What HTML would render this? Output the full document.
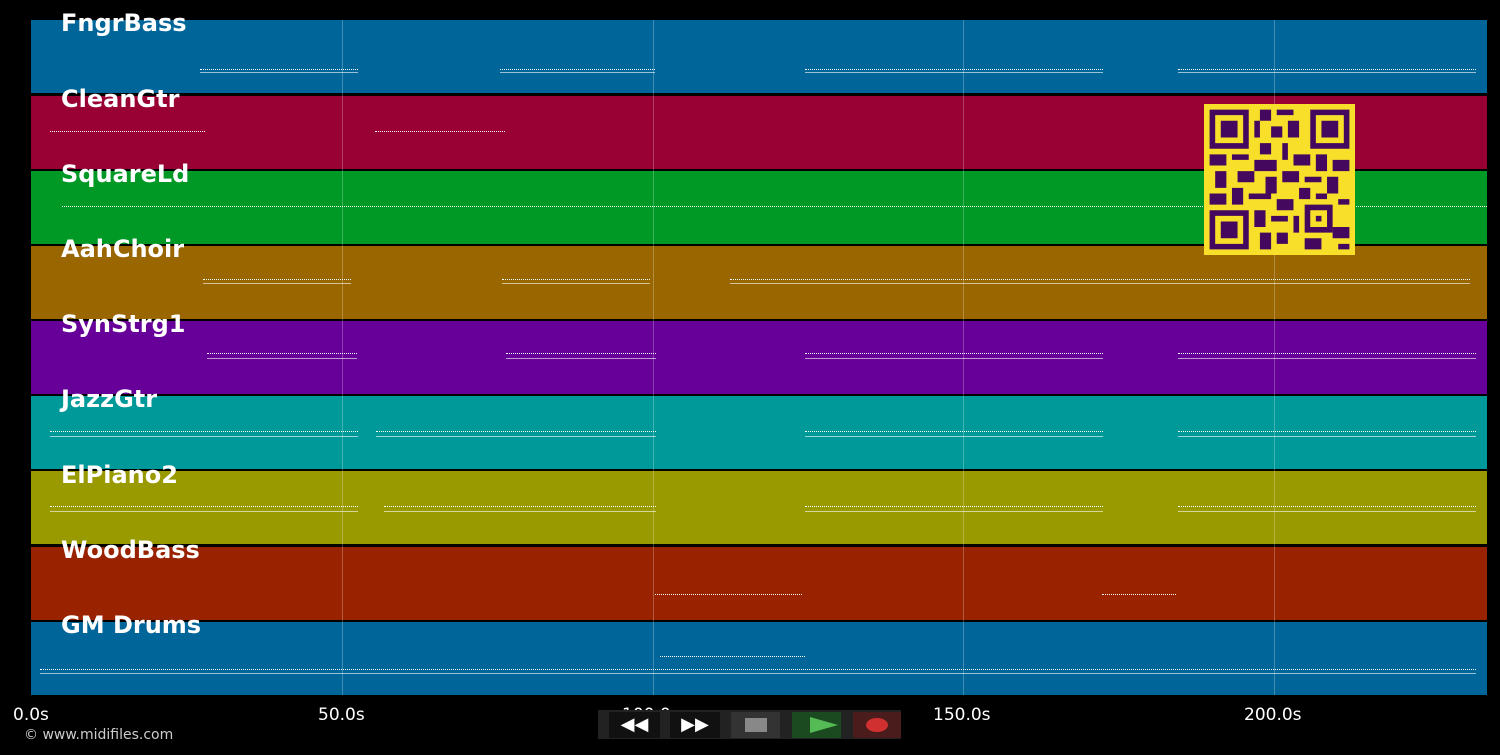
<!DOCTYPE html><html><head><style>
body{margin:0;background:#000;width:1500px;height:755px;overflow:hidden;position:relative;font-family:"DejaVu Sans","Liberation Sans",sans-serif}
.t{position:absolute;left:31px;width:1456px;height:73px}
.l{position:absolute;left:61px;color:#fff;font-weight:bold;font-size:24px}
.g{position:absolute;top:20px;height:675px;width:1px;background:rgba(255,255,255,.25)}
.n{position:absolute;height:2px;border-top:1px dotted #fff;border-bottom:1px solid rgba(255,255,255,.6)}
.ax{position:absolute;top:705px;color:#fff;font-size:17px}
.b{position:absolute;top:712px;height:26px}
</style></head><body>
<div class="t" style="top:20px;background:#006699"></div>
<div class="t" style="top:96px;background:#990033"></div>
<div class="t" style="top:171px;background:#009926"></div>
<div class="t" style="top:246px;background:#996600"></div>
<div class="t" style="top:321px;background:#660099"></div>
<div class="t" style="top:396px;background:#009999"></div>
<div class="t" style="top:471px;background:#999900"></div>
<div class="t" style="top:547px;background:#992200"></div>
<div class="t" style="top:622px;background:#006699"></div>
<div class="g" style="left:342px"></div><div class="g" style="left:653px"></div><div class="g" style="left:963px"></div><div class="g" style="left:1274px"></div>
<div class="n" style="top:69px;left:200px;width:158px"></div><div class="n" style="top:69px;left:500px;width:155px"></div><div class="n" style="top:69px;left:805px;width:298px"></div><div class="n" style="top:69px;left:1178px;width:298px"></div>
<div class="n" style="top:131px;left:50px;width:155px;border-bottom:none"></div><div class="n" style="top:131px;left:375px;width:130px;border-bottom:none"></div>
<div class="n" style="top:206px;left:62px;width:1425px;border-bottom:none"></div>
<div class="n" style="top:279px;left:203px;width:148px;height:3px"></div><div class="n" style="top:279px;left:502px;width:148px;height:3px"></div><div class="n" style="top:279px;left:730px;width:740px;height:3px"></div>
<div class="n" style="top:353px;left:207px;width:150px;height:4px"></div><div class="n" style="top:353px;left:506px;width:150px;height:4px"></div><div class="n" style="top:353px;left:805px;width:298px;height:4px"></div><div class="n" style="top:353px;left:1178px;width:298px;height:4px"></div>
<div class="n" style="top:431px;left:50px;width:308px;height:4px"></div><div class="n" style="top:431px;left:376px;width:280px;height:4px"></div><div class="n" style="top:431px;left:805px;width:298px;height:4px"></div><div class="n" style="top:431px;left:1178px;width:298px;height:4px"></div>
<div class="n" style="top:506px;left:50px;width:308px;height:4px"></div><div class="n" style="top:506px;left:384px;width:272px;height:4px"></div><div class="n" style="top:506px;left:805px;width:298px;height:4px"></div><div class="n" style="top:506px;left:1178px;width:298px;height:4px"></div>
<div class="n" style="top:594px;left:655px;width:147px;border-bottom:none"></div><div class="n" style="top:594px;left:1102px;width:74px;border-bottom:none"></div>
<div class="n" style="top:669px;left:40px;width:1436px;height:3px"></div><div class="n" style="top:656px;left:660px;width:145px;border-bottom:none"></div>
<div class="l" style="top:9px">FngrBass</div><div class="l" style="top:85px">CleanGtr</div><div class="l" style="top:160px">SquareLd</div><div class="l" style="top:235px">AahChoir</div><div class="l" style="top:310px">SynStrg1</div><div class="l" style="top:385px">JazzGtr</div><div class="l" style="top:461px">ElPiano2</div><div class="l" style="top:536px">WoodBass</div><div class="l" style="top:611px">GM Drums</div>
<svg style="position:absolute;left:1204px;top:104px" width="151" height="151" viewBox="0 0 27 27">
<rect width="27" height="27" fill="#f8e02a"/>
<g fill="#44095e">
<path d="M1 1h7v7h-7zM19 1h7v7h-7zM1 19h7v7h-7z"/>
</g><g fill="#f8e02a"><path d="M2 2h5v5h-5zM20 2h5v5h-5zM2 20h5v5h-5z"/></g>
<g fill="#44095e"><path d="M3 3h3v3h-3zM21 3h3v3h-3zM3 21h3v3h-3zM18 18h5v5h-5z"/>
<path d="M10 1h2v2h-2zM13 1h3v1h-3zM9 3h1v3h-1zM12 4h2v2h-2zM15 3h2v3h-2zM10 7h2v2h-2zM14 7h1v3h-1zM1 9h3v2h-3zM5 9h3v1h-3zM9 10h4v2h-4zM16 9h3v2h-3zM20 9h2v3h-2zM23 10h3v2h-3zM2 12h2v3h-2zM6 12h3v2h-3zM11 13h2v3h-2zM14 12h3v2h-3zM18 13h3v1h-3zM22 13h2v3h-2zM1 16h3v2h-3zM5 15h2v3h-2zM8 16h4v1h-4zM13 17h3v2h-3zM17 15h2v2h-2zM20 16h2v1h-2zM24 17h2v1h-2zM9 19h2v3h-2zM12 20h3v1h-3zM16 20h1v3h-1zM10 23h2v3h-2zM13 23h2v2h-2zM18 24h3v2h-3zM23 22h3v2h-3zM24 25h2v1h-2z"/></g>
<path d="M19 19h3v3h-3z" fill="#f8e02a"/><path d="M20 20h1v1h-1z" fill="#44095e"/>
</svg>
<div class="ax" style="left:13px">0.0s</div><div class="ax" style="left:318px">50.0s</div><div class="ax" style="left:622px">100.0s</div><div class="ax" style="left:933px">150.0s</div><div class="ax" style="left:1244px">200.0s</div>
<div style="position:absolute;left:24px;top:727px;color:#ccc;font-size:14px">© www.midifiles.com</div>
<div style="position:absolute;left:598px;top:710px;width:303px;height:29px;background:#222"></div>
<div class="b" style="left:609px;width:51px;background:#111;color:#fff;font-size:18px;text-align:center;line-height:26px">◀◀</div>
<div class="b" style="left:670px;width:50px;background:#111;color:#fff;font-size:18px;text-align:center;line-height:26px">▶▶</div>
<div class="b" style="left:731px;width:49px;background:#333"><div style="position:absolute;left:14px;top:6px;width:22px;height:14px;background:#888"></div></div>
<div class="b" style="left:792px;width:49px;background:#1c4a20"><svg width="49" height="26"><path d="M18 5L46 13L18 21z" fill="#55bb55"/></svg></div>
<div class="b" style="left:853px;width:48px;background:#4a1c1c"><div style="position:absolute;left:13px;top:6px;width:22px;height:14px;border-radius:50%;background:#d03030"></div></div>
</body></html>
